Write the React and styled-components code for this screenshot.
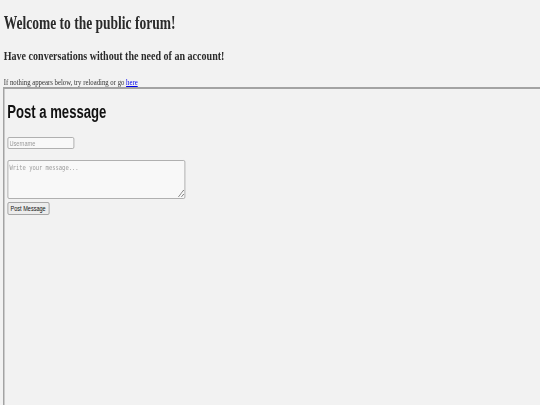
import React from "react";
import styled, { createGlobalStyle } from "styled-components";

const Global = createGlobalStyle`
  html, body {
    margin: 0;
    padding: 0;
    background: #f2f2f2;
    overflow: hidden;
  }
  #root { width: 540px; height: 405px; overflow: hidden; }
`;

/* The reference is horizontally condensed: the page is laid out at 720px and squeezed to 540px */
const Page = styled.div`
  width: 720px;
  height: 420px;
  box-sizing: border-box;
  padding: 13px 0 0 5px;
  transform: scaleX(0.75);
  transform-origin: 0 0;
  display: flex;
  flex-direction: column;
  font-family: "Liberation Serif", "Times New Roman", serif;
  color: #222;
`;

const Title = styled.h1`
  margin: 0;
  font-size: 18px;
  line-height: 20px;
  font-weight: bold;
  color: #2a2a2a;
`;

const Subtitle = styled.h2`
  margin: 15px 0 0;
  font-size: 13.4px;
  line-height: 15px;
  font-weight: bold;
  color: #2a2a2a;
`;

const Note = styled.p`
  margin: 14px 0 0;
  font-size: 9px;
  line-height: 10px;
  color: #333;
`;

const Link = styled.a`
  color: #0000ee;
  text-decoration: underline;
`;

const Frame = styled.div`
  flex: 1;
  margin-left: -1px;
  margin-right: -4px;
  border-style: solid;
  border-width: 2px;
  border-color: #a3a3a3 #e0e0e0 #e0e0e0 #a3a3a3;
  padding: 12.5px 0 0 3.5px;
  display: flex;
  flex-direction: column;
  align-items: flex-start;
  font-family: "Liberation Sans", Arial, sans-serif;
  color: #111;
`;

const FrameTitle = styled.h1`
  margin: 0;
  font-size: 17.5px;
  line-height: 20px;
  font-weight: bold;
  color: #111;
`;

const Field = styled.input`
  margin-top: 15.5px;
  box-sizing: border-box;
  width: 89px;
  height: 12px;
  padding: 0 2px;
  border: 1px solid #a6a6a6;
  border-radius: 2px;
  background: #f8f8f8;
  font-family: "Liberation Sans", Arial, sans-serif;
  font-size: 7.5px;
  outline: none;
  &::placeholder { color: #9a9a9a; }
`;

const Message = styled.textarea`
  margin-top: 11px;
  box-sizing: border-box;
  width: 237px;
  height: 39px;
  padding: 2px 2px;
  border: 1px solid #a6a6a6;
  border-radius: 2px;
  background: #f8f8f8;
  font-family: "DejaVu Sans Mono", "Liberation Mono", monospace;
  font-size: 7.3px;
  line-height: 9px;
  outline: none;
  &::placeholder { color: #9a9a9a; }
`;

const Button = styled.button`
  margin-top: 3px;
  box-sizing: border-box;
  width: 56px;
  height: 13px;
  padding: 0;
  border: 1px solid #9c9c9c;
  border-radius: 2px;
  background: #ececec;
  color: #111;
  font-family: "Liberation Sans", Arial, sans-serif;
  font-size: 7.4px;
  line-height: 11px;
`;

export default function App() {
  return (
    <>
      <Global />
      <Page>
        <Title>Welcome to the public forum!</Title>
        <Subtitle>Have conversations without the need of an account!</Subtitle>
        <Note>
          If nothing appears below, try reloading or go <Link href="#">here</Link>
        </Note>
        <Frame>
          <FrameTitle>Post a message</FrameTitle>
          <Field placeholder="Username" />
          <Message placeholder="Write your message..." />
          <Button>Post Message</Button>
        </Frame>
      </Page>
    </>
  );
}
